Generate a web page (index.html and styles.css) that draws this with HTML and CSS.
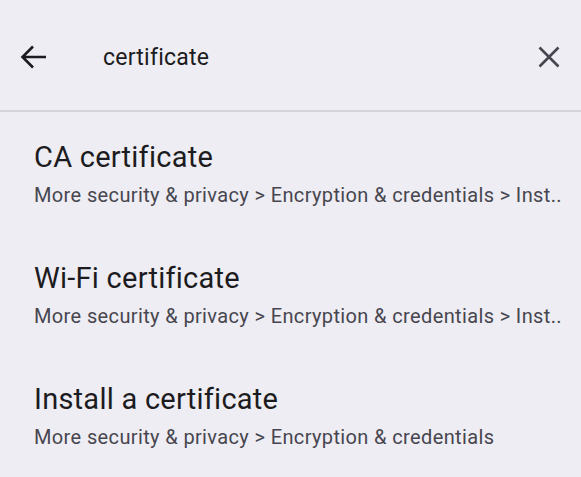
FILE: index.html
```html
<!DOCTYPE html>
<html lang="en">
<head>
<meta charset="utf-8">
<title>Search settings</title>
<link rel="stylesheet" href="styles.css">
</head>
<body>
<div class="screen">
  <header class="search-bar">
    <button class="icon-btn back" aria-label="Back">
      <svg width="28" height="26" viewBox="0 0 28 26"><path d="M2.5 13H26M13 2.5L2.5 13L13 23.5" fill="none" stroke="#1c1b20" stroke-width="2.6"/></svg>
    </button>
    <div class="query">certificate</div>
    <button class="icon-btn clear" aria-label="Clear">
      <svg width="22" height="22" viewBox="0 0 22 22"><path d="M1.5 1.5L20.5 20.5M20.5 1.5L1.5 20.5" fill="none" stroke="#45464f" stroke-width="2.6"/></svg>
    </button>
  </header>
  <ul class="results">
    <li class="result">
      <div class="title">CA certificate</div>
      <div class="path">More security &amp; privacy &gt; Encryption &amp; credentials &gt; Inst..</div>
    </li>
    <li class="result">
      <div class="title">Wi-Fi certificate</div>
      <div class="path">More security &amp; privacy &gt; Encryption &amp; credentials &gt; Inst..</div>
    </li>
    <li class="result">
      <div class="title">Install a certificate</div>
      <div class="path">More security &amp; privacy &gt; Encryption &amp; credentials</div>
    </li>
  </ul>
</div>
</body>
</html>
```

FILE: styles.css
```css
* { box-sizing: border-box; }
html, body {
  margin: 0;
  padding: 0;
  background: #eeedf3;
}
body {
  font-family: Roboto, "Noto Sans", sans-serif;
  color: #1c1b20;
}
.screen {
  width: 581px;
  height: 477px;
  overflow: hidden;
}
.search-bar {
  display: flex;
  align-items: center;
  height: 112px;
  padding-top: 4px;
  border-bottom: 2px solid #d4d3d9;
}
.icon-btn {
  background: none;
  border: 0;
  padding: 0;
  display: flex;
  align-items: center;
  justify-content: center;
}
.back {
  margin-left: 20px;
  width: 28px;
  height: 26px;
}
.query {
  margin-left: 55px;
  flex: 1;
  font-size: 23px;
  color: #1c1b20;
  letter-spacing: 0.25px;
}
.clear {
  margin-right: 21px;
  width: 22px;
  height: 22px;
}
.results {
  list-style: none;
  margin: 0;
  padding: 0;
}
.result {
  padding: 25px 0 20px 34px;
  height: 121px;
}
.title {
  font-size: 29px;
  line-height: 40px;
  letter-spacing: 0.25px;
  color: #1c1b20;
  white-space: nowrap;
}
.path {
  font-size: 20px;
  line-height: 36px;
  letter-spacing: 0.37px;
  color: #47464f;
  white-space: nowrap;
}
```
